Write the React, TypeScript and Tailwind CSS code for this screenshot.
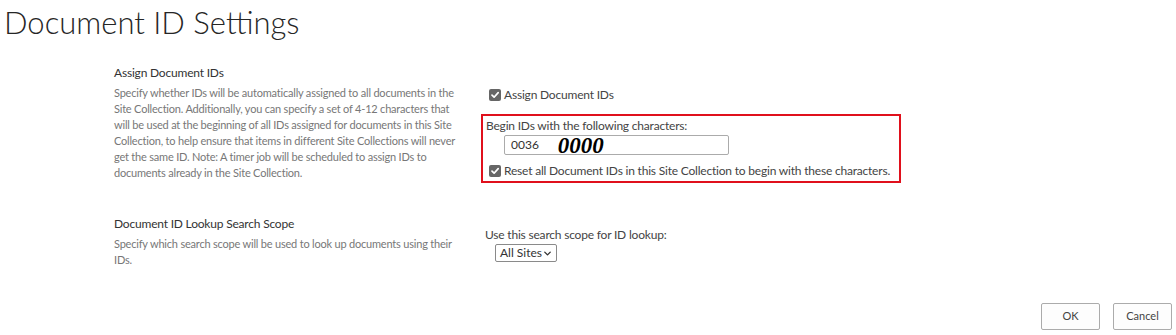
import { ChevronDown } from "lucide-react";

function Check() {
    return (
        <span className="inline-flex h-[12px] w-[12px] shrink-0 items-center justify-center rounded-[2px] bg-[#666666]">
            <svg width="10" height="10" viewBox="0 0 10 10">
                <path d="M2 5.2 L4.1 7.2 L8.2 2.6" stroke="#fff" strokeWidth="1.7" fill="none" strokeLinecap="round" strokeLinejoin="round" />
            </svg>
        </span>
    );
}

const assignLines = [
    "Specify whether IDs will be automatically assigned to all documents in the",
    "Site Collection. Additionally, you can specify a set of 4-12 characters that",
    "will be used at the beginning of all IDs assigned for documents in this Site",
    "Collection, to help ensure that items in different Site Collections will never",
    "get the same ID. Note: A timer job will be scheduled to assign IDs to",
    "documents already in the Site Collection.",
];

const scopeLines = ["Specify which search scope will be used to look up documents using their", "IDs."];

export default function App() {
    return (
        <div className="flex h-[335px] w-[1176px] flex-col overflow-hidden bg-white font-['Lato','Liberation_Sans',sans-serif]">
            <h1 className="pl-[4px] pt-[4px] text-[31px] font-light leading-[36px] text-[#262626]">Document ID Settings</h1>

            <div className="ml-[114px] mt-[24px] grid grid-cols-[371px_1fr]">
                <div>
                    <h2 className="text-[12px] leading-[17px] tracking-[-0.2px] text-[#333]">Assign Document IDs</h2>
                    <p className="mt-[4px] text-[11px] leading-[16px] tracking-[-0.2px] text-[#777]">
                        {assignLines.map((l) => (
                            <span key={l} className="block whitespace-nowrap">{l}</span>
                        ))}
                    </p>
                </div>
                <div className="pt-[22px]">
                    <label className="flex items-center gap-[3px] pl-[4px] text-[12px] leading-[17px] tracking-[-0.2px] text-[#444]">
                        <Check />
                        Assign Document IDs
                    </label>
                    <div className="ml-[-4px] mt-[11px] w-[420px] border-[2px] border-[#e0101c] px-[3px] pb-[2px] pt-[1px]">
                        <div className="text-[12px] leading-[17px] tracking-[-0.2px] text-[#444]">Begin IDs with the following characters:</div>
                        <div className="ml-[18px] mt-[1px] flex h-[20px] w-[225px] items-center rounded-[2px] border border-[#ababab] pl-[6px]">
                            <span className="text-[12px] text-[#333]">0036</span>
                            <span className="ml-[19px] font-['Liberation_Serif',serif] text-[23px] font-bold italic leading-none text-black">0000</span>
                        </div>
                        <label className="mt-[7px] flex items-center gap-[3px] whitespace-nowrap pl-[3px] text-[12px] leading-[17px] tracking-[-0.2px] text-[#444]">
                            <Check />
                            Reset all Document IDs in this Site Collection to begin with these characters.
                        </label>
                    </div>
                </div>

                <div className="mt-[32px]">
                    <h2 className="text-[12px] leading-[17px] tracking-[-0.2px] text-[#333]">Document ID Lookup Search Scope</h2>
                    <p className="mt-[4px] text-[11px] leading-[16px] tracking-[-0.2px] text-[#777]">
                        {scopeLines.map((l) => (
                            <span key={l} className="block whitespace-nowrap">{l}</span>
                        ))}
                    </p>
                </div>
                <div className="mt-[43px]">
                    <div className="text-[12px] leading-[17px] tracking-[-0.2px] text-[#444]">Use this search scope for ID lookup:</div>
                    <div className="ml-[10px] mt-[1px] flex h-[18px] w-[62px] items-center justify-between whitespace-nowrap rounded-[2px] border border-[#8a8a8a] pl-[4px] pr-[3px] text-[12px] text-[#333]">
                        All Sites
                        <ChevronDown size={11} strokeWidth={3} />
                    </div>
                </div>
            </div>

            <div className="mt-auto flex justify-end gap-[13px] pb-[5px] pr-[4px]">
                <button className="h-[27px] w-[59px] rounded-[2px] border border-[#ababab] bg-[#fdfdfd] text-[11px] text-[#444]">OK</button>
                <button className="h-[27px] w-[59px] rounded-[2px] border border-[#ababab] bg-[#fdfdfd] text-[11px] text-[#444]">Cancel</button>
            </div>
        </div>
    );
}
